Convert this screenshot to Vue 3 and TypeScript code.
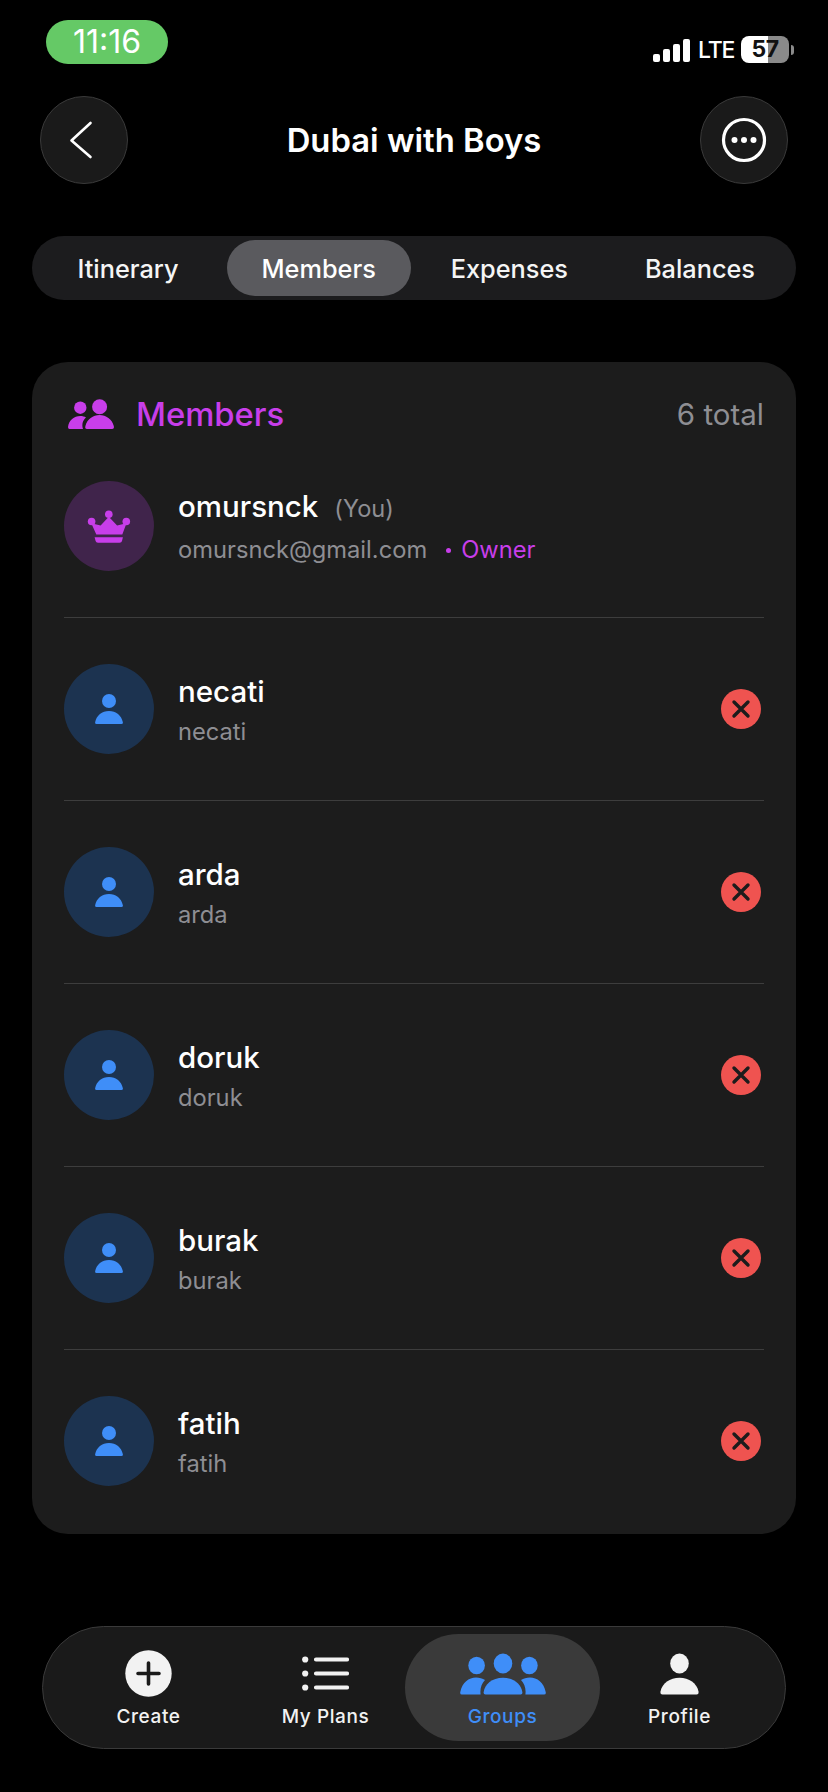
<template>
  <div class="screen">
    <!-- Status bar -->
    <div class="status-bar">
      <div class="time-pill">11:16</div>
      <div class="status-right">
        <div class="signal">
          <span class="bar bar-1"></span>
          <span class="bar bar-2"></span>
          <span class="bar bar-3"></span>
          <span class="bar bar-4"></span>
        </div>
        <span class="lte">LTE</span>
        <div class="battery">57</div>
        <span class="battery-cap"></span>
      </div>
    </div>

    <!-- Header -->
    <div class="header">
      <button class="round-btn">
        <svg class="back-icon" width="24" height="38" viewBox="0 0 24 38" fill="none">
          <path d="M21.5 2 L2.5 19.5 L21.5 36" stroke="#fff" stroke-width="2.6" stroke-linecap="round" stroke-linejoin="round" />
        </svg>
      </button>
      <div class="title">Dubai with Boys</div>
      <button class="round-btn">
        <svg width="46" height="46" viewBox="0 0 46 46" fill="none">
          <circle cx="23" cy="23" r="20.5" stroke="#fff" stroke-width="3.2" />
          <circle cx="13.5" cy="23" r="3" fill="#fff" />
          <circle cx="23" cy="23" r="3" fill="#fff" />
          <circle cx="32.5" cy="23" r="3" fill="#fff" />
        </svg>
      </button>
    </div>

    <!-- Tabs -->
    <div class="tabs">
      <div
        v-for="tab in tabs"
        :key="tab"
        class="tab"
        :class="{ 'tab-active': tab === 'Members' }"
      >
        {{ tab }}
      </div>
    </div>

    <!-- Members card -->
    <div class="card">
      <div class="card-header">
        <svg class="members-icon" width="47" height="31" viewBox="0 0 47 31" fill="#c83eea">
          <circle cx="12.3" cy="8.7" r="6.2" />
          <circle cx="31.6" cy="7.7" r="7.5" />
          <path d="M0 28 C1 21 6 17 12.3 17 C14.5 17 16.5 17.5 18 18.5 C15 21 13.5 25 15 30 L1.5 30 Q0 30 0 28 Z" />
          <path d="M19 30 Q16.6 30 17.4 27 C19.2 20 25 16 31.6 16 C38 16 44 20 45.8 27 Q46.5 30 44 30 Z" />
        </svg>
        <span class="card-title">Members</span>
        <span class="card-total">6 total</span>
      </div>

      <div class="row row-owner">
        <div class="avatar avatar-owner">
          <svg width="44" height="34" viewBox="-0.6 -1 44 34" fill="#c83eea">
            <circle cx="4" cy="11.5" r="3.8" />
            <circle cx="21.2" cy="4.2" r="3.8" />
            <circle cx="38.7" cy="11.5" r="3.8" />
            <path d="M3.7 13.3 L13 15.5 L21.2 6.7 L29.5 15.5 L38.9 13.3 L34.7 24.4 L8.7 24.4 Z" />
            <path d="M7 27.3 L35.3 27.3 L34.4 31 Q34 32.8 32 32.8 L10.4 32.8 Q8.4 32.8 8 31 Z" />
          </svg>
        </div>
        <div class="info">
          <div class="name-line">
            <span class="name">omursnck</span>
            <span class="you">(You)</span>
          </div>
          <div class="sub-line">
            <span class="sub">omursnck@gmail.com</span>
            <span class="owner-dot"></span>
            <span class="owner">Owner</span>
          </div>
        </div>
      </div>

      <div v-for="member in members" :key="member" class="row">
        <div class="avatar avatar-member">
          <svg width="28" height="30" viewBox="0 0 28 30" fill="#3f8ef8">
            <circle cx="14" cy="7" r="7" />
            <path d="M1.5 30 Q-.3 30 .2 28 C1.5 21.5 7 17 14 17 C21 17 26.5 21.5 27.8 28 Q28.3 30 26.5 30 Z" />
          </svg>
        </div>
        <div class="info">
          <div class="name-line">
            <span class="name">{{ member }}</span>
          </div>
          <div class="sub-line">
            <span class="sub">{{ member }}</span>
          </div>
        </div>
        <div class="remove-btn">
          <svg width="20" height="20" viewBox="0 0 20 20" fill="none">
            <path d="M3 3 L17 17 M17 3 L3 17" stroke="#1c1c1c" stroke-width="3.4" stroke-linecap="round" />
          </svg>
        </div>
      </div>
    </div>

    <!-- Bottom nav -->
    <div class="bottom-nav">
      <div class="nav-item">
        <svg class="nav-icon" width="47" height="47" viewBox="0 0 47 47" fill="none">
          <circle cx="23.5" cy="23.5" r="23.2" fill="#f2f2f2" />
          <path d="M23.5 13 V34 M13 23.5 H34" stroke="#1a1a1a" stroke-width="3.6" stroke-linecap="round" />
        </svg>
        <span class="nav-label">Create</span>
      </div>
      <div class="nav-item">
        <svg class="nav-icon" width="47" height="47" viewBox="0 0 47 47" fill="none">
          <circle cx="3.2" cy="9.5" r="3.1" fill="#f2f2f2" />
          <circle cx="3.2" cy="23.5" r="3.1" fill="#f2f2f2" />
          <circle cx="3.2" cy="37.5" r="3.1" fill="#f2f2f2" />
          <path d="M14 9.5 H45 M14 23.5 H45 M14 37.5 H45" stroke="#f2f2f2" stroke-width="4.2" stroke-linecap="round" />
        </svg>
        <span class="nav-label">My Plans</span>
      </div>
      <div class="nav-item nav-item-active">
        <svg class="nav-icon" width="86" height="47" viewBox="0 -3.5 86 47" fill="#3f8ef8">
          <ellipse cx="16.6" cy="12" rx="8.3" ry="8.7" />
          <ellipse cx="43" cy="10" rx="9.3" ry="10" />
          <ellipse cx="69.4" cy="12" rx="8.3" ry="8.7" />
          <path d="M2 41 Q-.3 41 .3 38.5 C2 29 9 24 16 24 C19.5 24 22.5 25 25 26.5 C21.5 30 19.8 35.5 20.6 41 Z" />
          <path d="M84 41 Q86.3 41 85.7 38.5 C84 29 77 24 70 24 C66.5 24 63.5 25 61 26.5 C64.5 30 66.2 35.5 65.4 41 Z" />
          <path d="M25.5 41 Q23.4 41 23.6 39 C24.5 31 32 24.3 43 24.3 C54 24.3 61.5 31 62.4 39 C62.6 41 60.5 41 60.5 41 Z" />
        </svg>
        <span class="nav-label">Groups</span>
      </div>
      <div class="nav-item">
        <svg class="nav-icon" width="39" height="47" viewBox="0 -3.5 39 47" fill="#f2f2f2">
          <ellipse cx="19.5" cy="10" rx="9.3" ry="10" />
          <path d="M2.5 41 Q0 41 .5 38 C2 30 10 24.3 19.5 24.3 C29 24.3 37 30 38.5 38 Q39 41 36.5 41 Z" />
        </svg>
        <span class="nav-label">Profile</span>
      </div>
    </div>
  </div>
</template>

<script setup lang="ts">
const tabs: string[] = ['Itinerary', 'Members', 'Expenses', 'Balances']
const members: string[] = ['necati', 'arda', 'doruk', 'burak', 'fatih']
</script>

<style>
html,
body {
  margin: 0;
  background: #000;
}
</style>

<style scoped>
.screen {
  width: 828px;
  height: 1792px;
  background: #000;
  color: #fff;
  font-family: Inter, "Liberation Sans", sans-serif;
  overflow: hidden;
  box-sizing: border-box;
  padding-top: 20px;
}

.status-bar {
  display: flex;
  justify-content: space-between;
  align-items: flex-start;
  height: 44px;
  padding: 0 34px 0 46px;
}

.time-pill {
  width: 122px;
  height: 44px;
  border-radius: 22px;
  background: #65c966;
  font-size: 32px;
  line-height: 44px;
  text-align: center;
}

.status-right {
  display: flex;
  align-items: center;
  margin-top: 16px;
  height: 27px;
}

.signal {
  display: flex;
  align-items: flex-end;
  gap: 3px;
  height: 23px;
  margin-top: 2px;
}

.bar {
  width: 7px;
  border-radius: 2px;
  background: #fff;
}

.bar-1 { height: 8px; }
.bar-2 { height: 13px; }
.bar-3 { height: 18px; }
.bar-4 { height: 23px; }

.lte {
  margin-left: 8px;
  width: 35px;
  font-size: 23px;
  font-weight: 500;
  letter-spacing: -1.2px;
}

.battery {
  width: 48px;
  height: 27px;
  margin-left: 8px;
  border-radius: 8px;
  background: linear-gradient(to right, #fff 56%, #8a8a8a 56%);
  color: #111;
  font-size: 23px;
  font-weight: 700;
  line-height: 27px;
  text-align: center;
  letter-spacing: -0.5px;
}

.battery-cap {
  width: 3px;
  height: 10px;
  margin-left: 2px;
  border-radius: 0 3px 3px 0;
  background: #8a8a8a;
}

.header {
  display: flex;
  align-items: center;
  justify-content: space-between;
  margin-top: 32px;
  padding: 0 40px;
}

.round-btn {
  display: flex;
  align-items: center;
  justify-content: center;
  width: 88px;
  height: 88px;
  padding: 0;
  border: 1.5px solid #3a3a3a;
  border-radius: 50%;
  background: #1a1a1a;
  box-sizing: border-box;
}

.back-icon {
  margin-right: 6px;
}

.title {
  font-size: 32.8px;
  font-weight: 600;
}

.tabs {
  display: grid;
  grid-template-columns: repeat(4, 184px);
  justify-content: space-between;
  height: 64px;
  box-sizing: border-box;
  margin: 52px 32px 0;
  padding: 4px;
  border-radius: 32px;
  background: #1c1c1e;
}

.tab {
  display: flex;
  align-items: center;
  justify-content: center;
  border-radius: 28px;
  font-size: 25.3px;
  font-weight: 500;
  color: #f5f5f5;
}

.tab-active {
  background: #5a5a5e;
  color: #fff;
}

.card {
  margin: 62px 32px 0;
  height: 1172px;
  box-sizing: border-box;
  padding: 0 32px;
  border-radius: 36px;
  background: #1c1c1c;
}

.card-header {
  display: flex;
  align-items: center;
  height: 104px;
  padding-left: 4px;
}

.card-title {
  margin-left: 21px;
  font-size: 32.8px;
  font-weight: 500;
  color: #c83eea;
}

.card-total {
  margin-left: auto;
  font-size: 29.5px;
  color: #8e8e93;
}

.row {
  display: flex;
  align-items: center;
  height: 182px;
  border-top: 1px solid #3d3d3d;
}

.row-owner {
  height: 151px;
  padding: 15px 0 46px;
  box-sizing: border-box;
  border-top: 0;
}

.avatar {
  display: flex;
  align-items: center;
  justify-content: center;
  flex-shrink: 0;
  width: 90px;
  height: 90px;
  border-radius: 50%;
}

.avatar-owner {
  background: #40244b;
}

.avatar-member {
  background: #1c3350;
}

.info {
  flex: 1;
  margin-left: 24px;
  padding-top: 1px;
}

.name-line {
  display: flex;
  align-items: baseline;
  line-height: 36px;
}

.name {
  font-size: 29.5px;
  font-weight: 500;
}

.you {
  margin-left: 16px;
  font-size: 23.6px;
  color: #8e8e93;
}

.sub-line {
  display: flex;
  align-items: center;
  margin-top: 8px;
  line-height: 30px;
}

.sub {
  font-size: 23.7px;
  color: #8e8e93;
}

.owner-dot {
  width: 5px;
  height: 5px;
  margin-left: 19px;
  border-radius: 50%;
  background: #c83eea;
}

.owner {
  margin-left: 10px;
  font-size: 23.7px;
  color: #c83eea;
}

.remove-btn {
  display: flex;
  align-items: center;
  justify-content: center;
  width: 40px;
  height: 40px;
  margin-right: 3px;
  border-radius: 50%;
  background: #ef5350;
}

.bottom-nav {
  display: grid;
  grid-template-columns: repeat(4, 1fr);
  height: 123px;
  box-sizing: border-box;
  margin: 92px 42px 0;
  padding: 0 17px;
  border: 1.5px solid #3a3a3a;
  border-radius: 62px;
  background: #1a1a1a;
}

.nav-item {
  position: relative;
  display: flex;
  flex-direction: column;
  align-items: center;
  padding-top: 23px;
}

.nav-item-active::before {
  content: "";
  position: absolute;
  top: 7px;
  bottom: 7px;
  left: -9px;
  right: -9px;
  border-radius: 54px;
  background: #3a3a3a;
}

.nav-icon {
  position: relative;
  display: block;
}

.nav-label {
  position: relative;
  margin-top: 8px;
  font-size: 19px;
  font-weight: 500;
  line-height: 24px;
  letter-spacing: 0.6px;
  color: #f2f2f2;
}

.nav-item-active .nav-label {
  color: #3f8ef8;
}
</style>
